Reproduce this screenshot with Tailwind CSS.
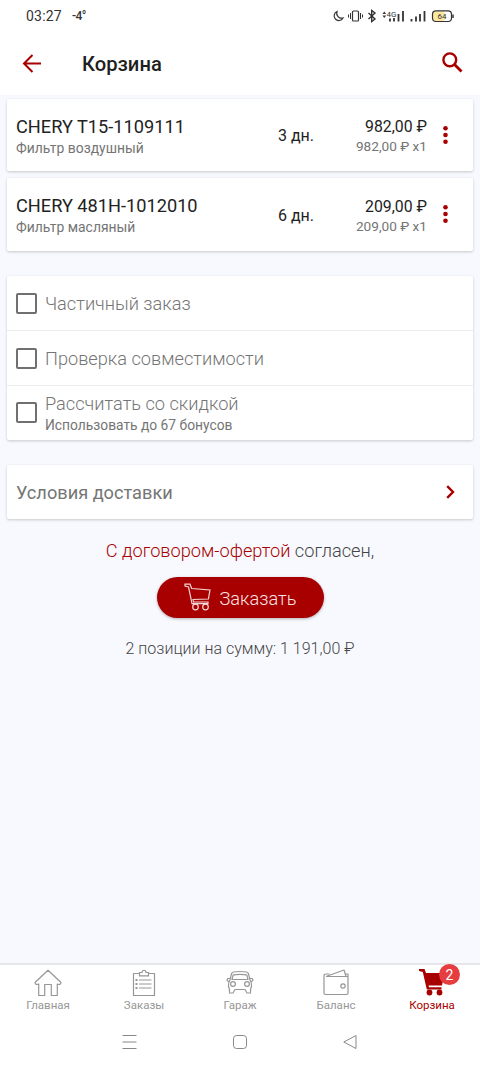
<!DOCTYPE html>
<html lang="ru">

<head>
    <meta charset="UTF-8">
    <meta name="viewport" content="width=device-width, initial-scale=1.0">
    <script src="https://cdn.jsdelivr.net/npm/@tailwindcss/browser@4"></script>
    <title>Корзина</title>
</head>

<body class="bg-[#f8f9fe] font-['Roboto',sans-serif]">
    <div class="w-[480px] h-[1067px] flex flex-col overflow-hidden">
        <!-- Status bar -->
        <div class="h-8 shrink-0 bg-white flex items-center justify-between pl-[26px] pr-[26px] text-[#333]">
            <div class="flex items-center gap-[10px] leading-4">
                <span class="text-[14px] tracking-[0.2px]">03:27</span>
                <span class="text-[12px] tracking-[-0.5px] font-medium">-4°</span>
            </div>
            <svg class="w-[122px] h-4" viewBox="0 0 122 16" fill="none" stroke="#333" stroke-width="1.2">
                <path d="M5 3.500a5 5 0 0 0 6 6.500a4.700 4.700 0 1 1-6-6.500z" />
                <rect x="20.500" y="3" width="6" height="10" rx="1" />
                <path d="M18.500 5v6M28.500 5v6M16.500 6.500v3M30.500 6.500v3" stroke-width="1" />
                <path d="M36.500 5l6.500 6-3.300 2.500v-11L43 5l-6.500 6" stroke-width="1.400" />
                <path d="M50.500 6l1.800-2.500 1.800 2.500zM50.500 7.500l1.800 2.500 1.800-2.500z" fill="#333" stroke="none" />
                <text x="54.500" y="8.500" font-size="8" fill="#333" stroke="none">4G</text>
                <path d="M58 13.500v-3M62 13.500v-3.500M66.500 13.500V6M71 13.500V3M79.500 13.500v-2.500M84 13.500V8.500M88 13.500V6M92.500 13.500V3" stroke-width="1.800" />
                <rect x="101" y="3.500" width="12" height="9.500" rx="3" fill="#fbe79d" stroke="none" />
                <rect x="100.500" y="2.800" width="19" height="10.700" rx="3.500" />
                <path d="M121 6.500v3.500" stroke-width="1.500" />
                <text x="105.500" y="11" font-size="8" fill="#333" stroke="none">64</text>
            </svg>
        </div>

        <!-- Header -->
        <header class="h-[63px] shrink-0 bg-white flex items-center pl-[22px] pr-[17px]">
            <svg class="w-5 h-5" viewBox="0 0 20 20" fill="none" stroke="#a80000" stroke-width="2">
                <path d="M19 9.500H2M10.500 1L2 9.500l8.500 8.500" />
            </svg>
            <h1 class="ml-10 pt-0.5 text-[20.200px] font-medium text-[#1f1f1f]">Корзина</h1>
            <svg class="ml-auto mb-0.5 w-[21px] h-[21px]" viewBox="0 0 21 21" fill="none" stroke="#a80000" stroke-width="2.400">
                <circle cx="7.800" cy="7.800" r="6.400" />
                <path d="M12.500 12.500l7 7" stroke-width="2.800" />
            </svg>
        </header>

        <main class="grow flex flex-col px-[7px] pt-[3.500px]">
            <!-- Cart items -->
            <section class="flex flex-col gap-[7px]">
                <div class="h-[72.500px] bg-white rounded-xs shadow-[0_1px_3px_rgba(0,0,0,0.2)] flex items-center pl-[9px] pr-[25px]">
                    <div class="w-[262px] pt-1">
                        <div class="text-[18.200px] leading-[22px] text-[#222]">CHERY T15-1109111</div>
                        <div class="text-[13.900px] leading-5 text-[#757575]">Фильтр воздушный</div>
                    </div>
                    <div class="text-base text-[#222] pt-[3px]">3 дн.</div>
                    <div class="ml-auto pt-[3px] text-right">
                        <div class="text-[15.800px] leading-[21px] text-[#222]">982,00 ₽</div>
                        <div class="text-[13.600px] leading-[19px] text-[#757575]">982,00 ₽ x1</div>
                    </div>
                    <svg class="ml-4 w-[5px] h-5" viewBox="0 0 5 20" fill="#a80000">
                        <circle cx="2.500" cy="3.200" r="2.300" /><circle cx="2.500" cy="10" r="2.300" /><circle cx="2.500" cy="16.800" r="2.300" />
                    </svg>
                </div>
                <div class="h-[72.500px] bg-white rounded-xs shadow-[0_1px_3px_rgba(0,0,0,0.2)] flex items-center pl-[9px] pr-[25px]">
                    <div class="w-[262px] pt-[3px]">
                        <div class="text-[18.200px] leading-[22px] text-[#222]">CHERY 481H-1012010</div>
                        <div class="text-[13.900px] leading-5 text-[#757575]">Фильтр масляный</div>
                    </div>
                    <div class="text-base text-[#222] pt-[3px]">6 дн.</div>
                    <div class="ml-auto pt-[3px] text-right">
                        <div class="text-[15.800px] leading-[21px] text-[#222]">209,00 ₽</div>
                        <div class="text-[13.600px] leading-[19px] text-[#757575]">209,00 ₽ x1</div>
                    </div>
                    <svg class="ml-4 w-[5px] h-5" viewBox="0 0 5 20" fill="#a80000">
                        <circle cx="2.500" cy="3.200" r="2.300" /><circle cx="2.500" cy="10" r="2.300" /><circle cx="2.500" cy="16.800" r="2.300" />
                    </svg>
                </div>
            </section>

            <!-- Options -->
            <section class="mt-[25px] bg-white rounded-xs shadow-[0_1px_3px_rgba(0,0,0,0.2)] text-[#757575]">
                <label class="h-[55px] flex items-center gap-2 pl-[9px] border-b border-[#ececec]">
                    <span class="mt-px w-[21px] h-[21px] border-2 border-[#707070] rounded-xs"></span>
                    <span class="text-[18.200px] font-light pt-[3px]">Частичный заказ</span>
                </label>
                <label class="h-[55px] flex items-center gap-2 pl-[9px] border-b border-[#ececec]">
                    <span class="mt-px w-[21px] h-[21px] border-2 border-[#707070] rounded-xs"></span>
                    <span class="text-[18.200px] font-light pt-[3px]">Проверка совместимости</span>
                </label>
                <label class="h-[54px] flex items-center gap-2 pl-[9px]">
                    <span class="w-[21px] h-[21px] border-2 border-[#707070] rounded-xs"></span>
                    <span class="flex flex-col pt-[3px]">
                        <span class="text-[18.200px] leading-[22px] font-light">Рассчитать со скидкой</span>
                        <span class="text-[13.800px] leading-5">Использовать до 67 бонусов</span>
                    </span>
                </label>
            </section>

            <!-- Delivery -->
            <section class="mt-[25px] h-[54px] bg-white rounded-xs shadow-[0_1px_3px_rgba(0,0,0,0.2)] flex items-center pl-[9px] pr-[18px]">
                <span class="text-[18.200px] text-[#757575] pt-0.5">Условия доставки</span>
                <svg class="ml-auto w-[9px] h-[14px]" viewBox="0 0 9 14" fill="none" stroke="#a80000" stroke-width="2.400">
                    <path d="M1.200 1.200L7 7l-5.800 5.800" />
                </svg>
            </section>

            <!-- Order -->
            <section class="flex flex-col items-center">
                <p class="mt-5 text-[18.200px] leading-6 font-light text-[#444]"><a href="#" class="text-[#a80000]">С договором-офертой</a> согласен,</p>
                <button type="button" class="mt-[14px] w-[167px] h-[41px] rounded-full bg-[#a80000] text-[#f7e3e3] flex items-center pl-[27px] gap-2 shadow-[0_1px_3px_rgba(0,0,0,0.3)]">
                    <svg class="w-7 h-7" viewBox="0 0 28 28" fill="none" stroke="#f3d5d5" stroke-width="1.200">
                        <path d="M1 1.200h5l1.700 4.300 18.300 1.500-1.600 9-15.400.5.500 2.500h14.500v1.700H8L4.500 4 1 3z" />
                        <circle cx="11.500" cy="24" r="2.800" /><circle cx="21.500" cy="24" r="2.800" />
                    </svg>
                    <span class="text-[18.200px] font-light pt-[3px]">Заказать</span>
                </button>
                <p class="mt-[19px] text-base leading-6 font-light text-[#444]">2 позиции на сумму: 1 191,00 ₽</p>
            </section>
        </main>

        <!-- Tabs -->
        <nav class="h-[56px] shrink-0 bg-white border-t-2 border-[#e6e7ea] grid grid-cols-5 text-[11.500px] leading-[14px] text-[#979797]">
            <a href="#" class="flex flex-col items-center pt-1">
                <svg class="w-7 h-7" viewBox="0 0 28 28" fill="none" stroke="#979797" stroke-width="1.200" stroke-linejoin="round">
                    <path d="M14 1.200L1 13.500c0 2 2 2.500 3.700 1.500v11.500h6V15.500h6.600v11h6V15c1.700 1 3.700.5 3.700-1.500z" />
                </svg>
                <span class="mt-px">Главная</span>
            </a>
            <a href="#" class="flex flex-col items-center pt-1">
                <svg class="w-7 h-7" viewBox="0 0 28 28" fill="none" stroke="#979797" stroke-width="1.200">
                    <path d="M9.500 4.500h-6v22h21v-22h-6M9.500 3.500h2.500c0-3 4-3 4 0h2.500v3.300h-9zM9 11h12.500M9 15h12.500M9 19h12.500" />
                    <path d="M5.500 11h2M5.500 15h2M5.500 19h2" stroke-width="2" />
                </svg>
                <span class="mt-px">Заказы</span>
            </a>
            <a href="#" class="flex flex-col items-center pt-1">
                <svg class="w-7 h-7" viewBox="0 0 28 28" fill="none" stroke="#979797" stroke-width="1.200" stroke-linejoin="round">
                    <path d="M4 11L5.500 4.800Q6 3.200 7.500 3q6.500-1 13 0 1.500.2 2 1.800L24 11M6 10.500l1.200-4.700q6.800-1 13.600 0l1.200 4.700zM4 11q-1.800 2-1.500 6l1 4v3h3.500l2-3.500h10l2 3.500h3.500v-3l1-4q.3-4-1.500-6M4 9.500H2q-1.500 1-.5 2.500l1.500.5M24 9.500h2q1.500 1 .5 2.500l-1.500.5" />
                    <circle cx="7" cy="15" r="2.400" /><circle cx="21" cy="15" r="2.400" />
                </svg>
                <span class="mt-px">Гараж</span>
            </a>
            <a href="#" class="flex flex-col items-center pt-1">
                <svg class="w-7 h-7" viewBox="0 0 28 28" fill="none" stroke="#979797" stroke-width="1.200" stroke-linejoin="round">
                    <path d="M4 7.500h21q1 0 1 1v15.500q0 1.500-1.500 1.500H3.500Q2 25.500 2 24V7q0-2 2-2h3.500M4 7.500L22 1l2 6.500M23.500 5H26v3" />
                    <circle cx="21" cy="17" r="2.200" />
                </svg>
                <span class="mt-px">Баланс</span>
            </a>
            <a href="#" class="relative flex flex-col items-center pt-1 text-[#a80000]">
                <svg class="w-7 h-7" viewBox="0 0 28 28" fill="#a80000">
                    <path d="M1 0h5.500l1.500 4h18.500l-2.500 12.500H10.500l.5 1.800h12.500V20.500H8.800L4.800 3 1 2z" />
                    <circle cx="11.500" cy="23.500" r="2.900" /><circle cx="21.500" cy="23.500" r="2.900" />
                </svg>
                <span class="mt-px">Корзина</span>
                <span class="absolute left-[55px] -top-px w-[21px] h-[21px] rounded-full bg-[#e53d40] text-white text-[14px] flex items-center justify-center">2</span>
            </a>
        </nav>

        <!-- System buttons -->
        <div class="h-12 shrink-0 bg-white flex items-start justify-center pt-[15px] gap-24">
            <svg class="w-[15px] h-4" viewBox="0 0 15 16" fill="none" stroke="#888"><path d="M.5 1.500h14M.5 8h14M.5 14.500h14" /></svg>
            <svg class="w-[14px] h-4" viewBox="0 0 14 16" fill="none" stroke="#888"><rect x=".5" y="1.500" width="13" height="13" rx="3" /></svg>
            <svg class="w-[15px] h-4" viewBox="0 0 15 16" fill="none" stroke="#888" stroke-linejoin="round"><path d="M13 1.500v13L.8 8z" /></svg>
        </div>
    </div>
</body>

</html>
